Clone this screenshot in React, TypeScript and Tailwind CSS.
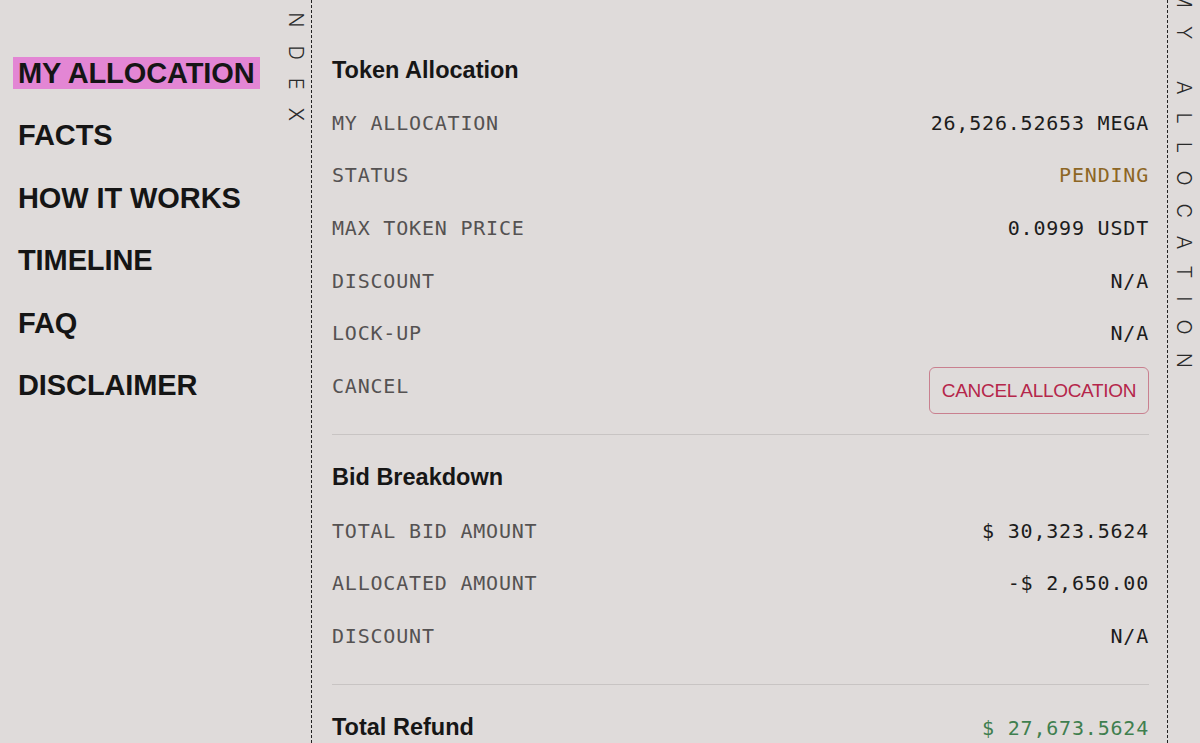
import React from 'react';

const navItems = ['MY ALLOCATION', 'FACTS', 'HOW IT WORKS', 'TIMELINE', 'FAQ', 'DISCLAIMER'];

const tokenRows = [
  { label: 'MY ALLOCATION', value: '26,526.52653 MEGA', tone: 'text-[#1c1c1c]' },
  { label: 'STATUS', value: 'PENDING', tone: 'text-[#8d6624]' },
  { label: 'MAX TOKEN PRICE', value: '0.0999 USDT', tone: 'text-[#1c1c1c]' },
  { label: 'DISCOUNT', value: 'N/A', tone: 'text-[#1c1c1c]' },
  { label: 'LOCK-UP', value: 'N/A', tone: 'text-[#1c1c1c]' },
];

const bidRows = [
  { label: 'TOTAL BID AMOUNT', value: '$ 30,323.5624' },
  { label: 'ALLOCATED AMOUNT', value: '-$ 2,650.00' },
  { label: 'DISCOUNT', value: 'N/A' },
];

const mono = "font-['DejaVu_Sans_Mono',monospace] text-[20px] tracking-[0.8px]";

const Row: React.FC<{ label: string; children: React.ReactNode }> = ({ label, children }) => (
  <div className="h-[52.6px] flex items-center justify-between">
    <span className={`${mono} text-[#555252]`}>{label}</span>
    {children}
  </div>
);

const Heading: React.FC<{ children: React.ReactNode }> = ({ children }) => (
  <h2 className="text-[23.5px] font-bold text-[#161616] leading-none">{children}</h2>
);

const App: React.FC = () => {
  return (
    <div className="flex h-[743px] overflow-hidden bg-[#dfdbda] font-['Liberation_Sans',Arial,sans-serif]">
      {/* Index nav */}
      <nav className="w-[280px] shrink-0 pt-[57px] pl-[13px] flex flex-col items-start gap-[30.4px]">
        {navItems.map((item, i) => (
          <a
            key={item}
            href="#"
            className={`px-[5px] leading-[32px] text-[29px] tracking-[-0.1px] font-bold text-[#151515] ${i === 0 ? 'bg-[#e386d4]' : ''}`}
          >
            {item}
          </a>
        ))}
      </nav>

      <div className="w-[32px] shrink-0 border-r border-dashed border-[#222] flex justify-center overflow-hidden">
        <span className="[writing-mode:vertical-rl] -mt-[11px] font-['Inter',sans-serif] font-light text-[20px] tracking-[18px] text-[#2a2a2a] whitespace-nowrap">
          INDEX
        </span>
      </div>

      {/* Main content */}
      <main className="flex-1 pl-[20px] pr-[18px] pt-[44px]">
        <section>
          <div className="h-[52.6px] flex items-center">
            <Heading>Token Allocation</Heading>
          </div>
          {tokenRows.map(row => (
            <Row key={row.label} label={row.label}>
              <span className={`${mono} ${row.tone}`}>{row.value}</span>
            </Row>
          ))}
          <Row label="CANCEL">
            <button className="mt-[10px] h-[47px] w-[220px] rounded-[6px] border border-[#c9808f] text-[19px] tracking-[-0.3px] text-[#b5264a]">
              CANCEL ALLOCATION
            </button>
          </Row>
        </section>

        <div className="h-px bg-[#c8c4c3] mt-[22px] mb-[16.7px]" />

        <section>
          <div className="h-[52.6px] flex items-center">
            <Heading>Bid Breakdown</Heading>
          </div>
          {bidRows.map(row => (
            <Row key={row.label} label={row.label}>
              <span className={`${mono} text-[#1c1c1c]`}>{row.value}</span>
            </Row>
          ))}
        </section>

        <div className="h-px bg-[#c8c4c3] mt-[22px] mb-[16.7px]" />

        <div className="h-[52.6px] flex items-center justify-between">
          <Heading>Total Refund</Heading>
          <span className={`${mono} text-[#3f7f4f]`}>$ 27,673.5624</span>
        </div>
      </main>

      <div className="w-[33px] shrink-0 border-l border-dashed border-[#222] flex justify-center overflow-hidden">
        <span className="[writing-mode:vertical-rl] -mt-[10px] font-['Inter',sans-serif] font-light text-[20px] tracking-[18px] text-[#2a2a2a] whitespace-nowrap">
          MY ALLOCATION
        </span>
      </div>
    </div>
  );
};

export default App;
